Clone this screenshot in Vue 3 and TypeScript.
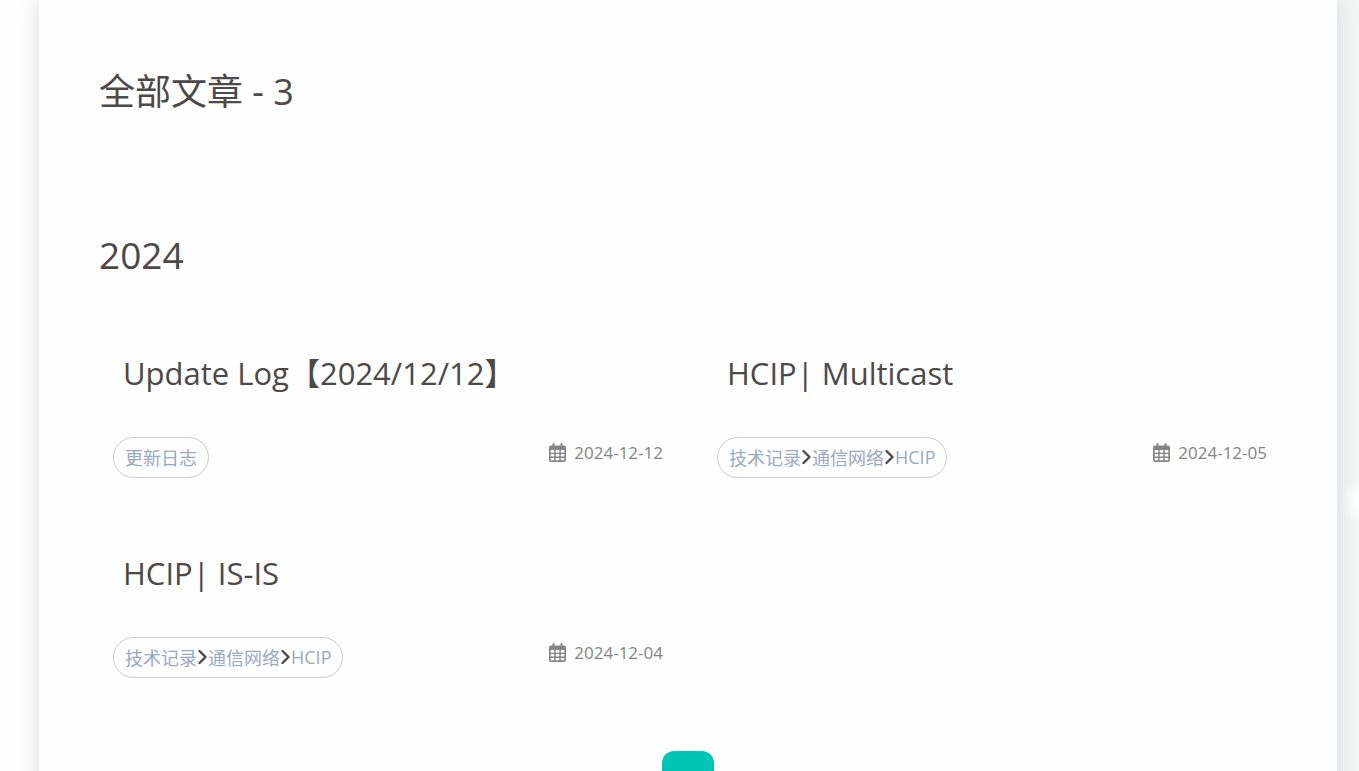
<script setup lang="ts">
interface Post {
  title: string
  tags: string[]
  date: string
}

const posts: Post[] = [
  { title: 'Update Log【2024/12/12】', tags: ['更新日志'], date: '2024-12-12' },
  { title: 'HCIP| Multicast', tags: ['技术记录', '通信网络', 'HCIP'], date: '2024-12-05' },
  { title: 'HCIP| IS-IS', tags: ['技术记录', '通信网络', 'HCIP'], date: '2024-12-04' },
]
</script>

<template>
  <div class="page">
    <main class="panel">
      <h1 class="heading">全部文章 - 3</h1>
      <h2 class="year">2024</h2>
      <section class="posts">
        <article v-for="post in posts" :key="post.title" class="post">
          <h3 class="title"><a href="#">{{ post.title }}</a></h3>
          <div class="meta">
            <div class="tags">
              <template v-for="(tag, i) in post.tags" :key="tag">
                <svg v-if="i > 0" class="chevron" viewBox="0 0 11 18" aria-hidden="true">
                  <path d="M2.500 3 8.500 9 2.500 15" />
                </svg>
                <a href="#">{{ tag }}</a>
              </template>
            </div>
            <div class="date">
              <svg class="calendar" viewBox="0 0 17 19" aria-hidden="true">
                <path fill-rule="evenodd" d="M3.500 1q0-1 1-1t1 1v1.500h6V1q0-1 1-1t1 1v1.500H15q2 0 2 2V17q0 2-2 2H2q-2 0-2-2V4.500q0-2 2-2h1.500zM1.700 7v2.700h3.500V7zm5 0v2.700h3.600V7zm5.100 0v2.700h3.500V7zM1.700 11v2.500h3.500V11zm5 0v2.500h3.600V11zm5.100 0v2.500h3.500V11zM1.700 14.900v2.300h3.500v-2.300zm5 0v2.300h3.600v-2.300zm5.100 0v2.300h3.500v-2.300z" />
              </svg>
              <time :datetime="post.date">{{ post.date }}</time>
            </div>
          </div>
        </article>
      </section>
      <nav class="pager">
        <button type="button" class="current" aria-current="page" aria-label="1"></button>
      </nav>
    </main>
  </div>
</template>

<style>
body {
  margin: 0;
}
</style>

<style scoped>
.page {
  box-sizing: border-box;
  height: 100vh;
  overflow: hidden;
  padding: 0 22px 0 39px;
  font-family: "Open Sans", "Noto Sans CJK SC", sans-serif;
  font-weight: 400;
  color: #4c4948;
  background:
    radial-gradient(circle at 100% 501px, #fff 0, #fff 3px, transparent 22px),
    linear-gradient(to right, #fefefe 50%, #f4f6f6 50%);
}
.panel {
  box-sizing: border-box;
  min-height: 100vh;
  padding: 64px 60px 40px;
  background: #fefefe;
  box-shadow: 0 0 20px rgba(7, 17, 27, 0.14);
}
.heading,
.year,
.title {
  margin: 0;
  font-weight: 400;
}
.heading {
  font-size: 36px;
  line-height: 56px;
}
.year {
  margin-top: 108px;
  font-size: 37px;
  line-height: 54px;
}
.posts {
  display: grid;
  grid-template-columns: 1fr 1fr;
  column-gap: 30px;
  margin-top: 66px;
}
.post {
  height: 200px;
}
.title {
  padding-left: 24px;
  font-size: 31px;
  line-height: 50px;
}
.title a {
  color: inherit;
  text-decoration: none;
}
.meta {
  display: flex;
  justify-content: space-between;
  align-items: flex-start;
  margin-top: 39px;
  padding: 0 10px 0 14px;
}
.tags {
  box-sizing: border-box;
  display: flex;
  align-items: center;
  height: 41px;
  padding: 0 11px 2px;
  border: 1px solid #ccc;
  border-radius: 21px;
  font-size: 18px;
}
.tags a {
  color: #99a9bf;
  text-decoration: none;
}
.chevron {
  width: 11px;
  height: 18px;
  fill: none;
  stroke: #4c4948;
  stroke-width: 2.4;
  stroke-linecap: round;
  stroke-linejoin: round;
}
.date {
  display: flex;
  align-items: center;
  gap: 8px;
  font-size: 17px;
  line-height: 31px;
  color: #858585;
}
.calendar {
  width: 17px;
  height: 19px;
  fill: currentColor;
}
.pager {
  display: flex;
  justify-content: center;
  margin-top: 3px;
}
.current {
  width: 52px;
  height: 52px;
  padding: 0;
  border: 0;
  border-radius: 12px;
  background: #00c4b6;
}
</style>
